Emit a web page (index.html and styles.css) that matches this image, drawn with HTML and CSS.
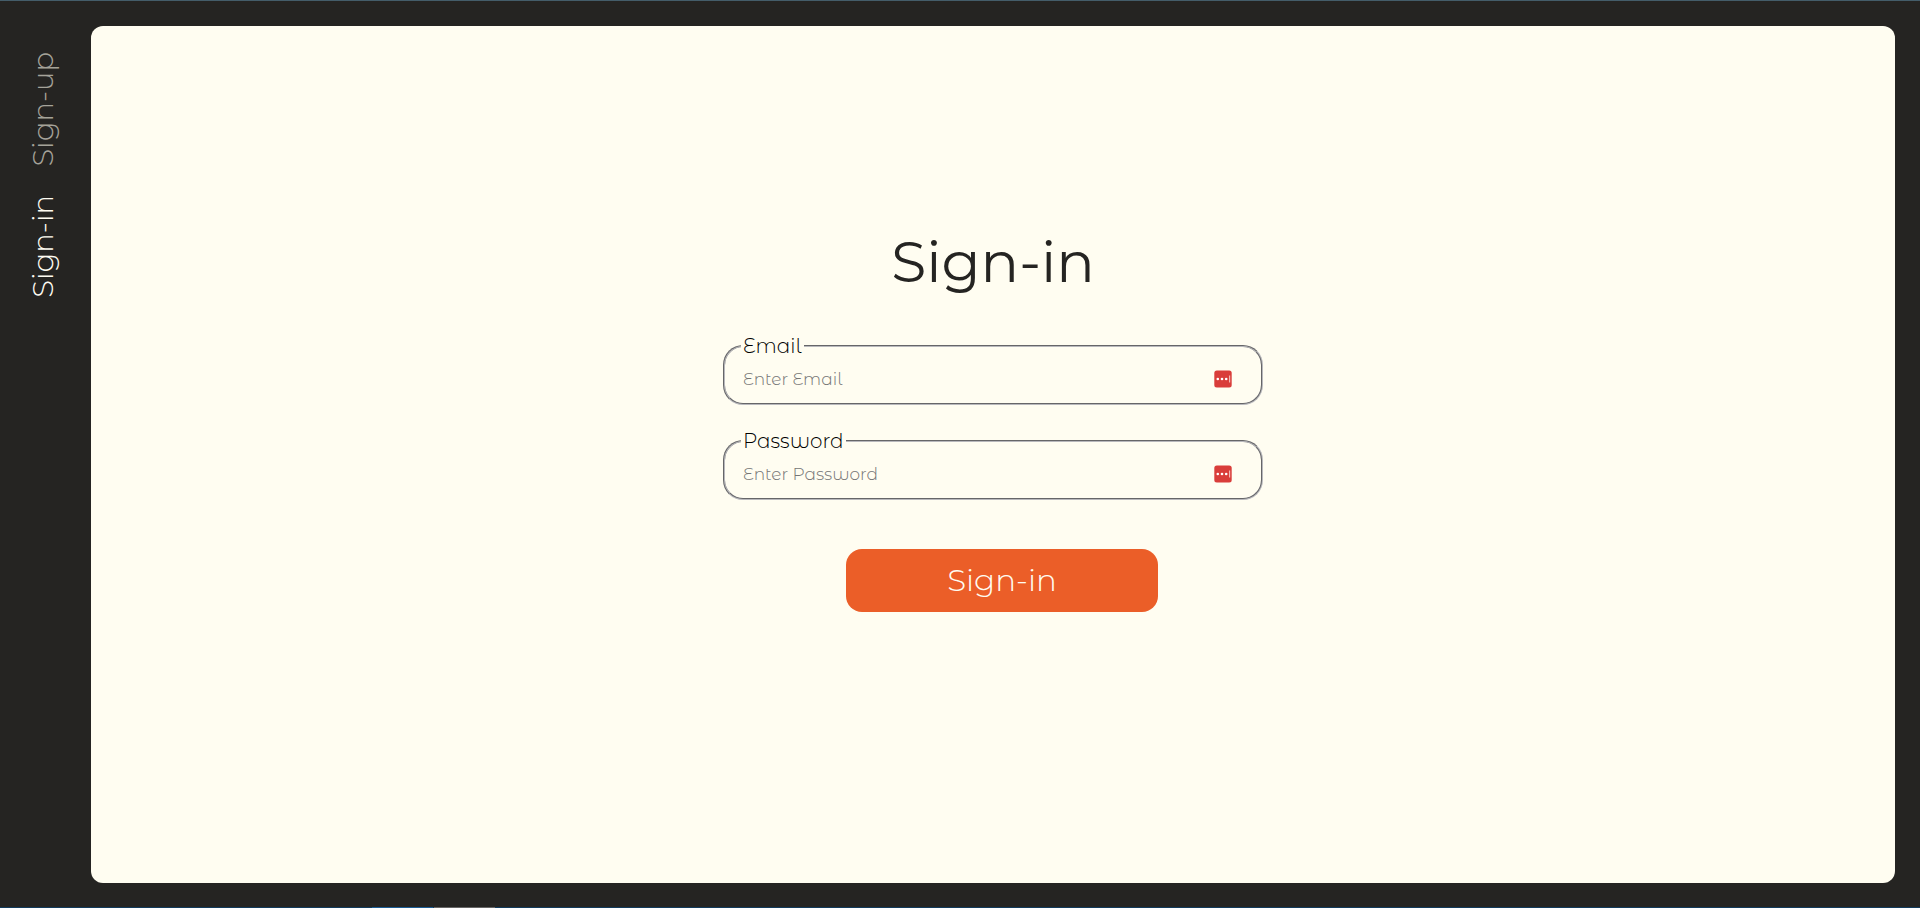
FILE: index.html
```html
<!DOCTYPE html>
<html lang="en">
<head>
<meta charset="utf-8">
<title>Sign-in</title>
<link rel="stylesheet" href="styles.css">
</head>
<body>
<div class="app">
  <nav class="sidebar">
    <a class="tab" href="#signup">Sign-up</a>
    <a class="tab active" href="#signin">Sign-in</a>
  </nav>
  <main class="panel">
    <form class="form">
      <h1 class="title">Sign-in</h1>
      <fieldset class="field">
        <legend><label for="email">Email</label></legend>
        <div class="row">
          <input id="email" type="email" placeholder="Enter Email">
          <svg class="key" viewBox="0 0 18 18" aria-hidden="true"><rect x="0.3" y="0.5" width="17.4" height="17" rx="2.5" fill="#d93d3a"/><circle cx="3.8" cy="9" r="1.3" fill="#fff"/><circle cx="8" cy="9" r="1.3" fill="#fff"/><circle cx="12.2" cy="9" r="1.3" fill="#fff"/><rect x="15" y="5.5" width="1.2" height="7" fill="#f3b5b0"/></svg>
        </div>
      </fieldset>
      <fieldset class="field">
        <legend><label for="password">Password</label></legend>
        <div class="row">
          <input id="password" type="password" placeholder="Enter Password">
          <svg class="key" viewBox="0 0 18 18" aria-hidden="true"><rect x="0.3" y="0.5" width="17.4" height="17" rx="2.5" fill="#d93d3a"/><circle cx="3.8" cy="9" r="1.3" fill="#fff"/><circle cx="8" cy="9" r="1.3" fill="#fff"/><circle cx="12.2" cy="9" r="1.3" fill="#fff"/><rect x="15" y="5.5" width="1.2" height="7" fill="#f3b5b0"/></svg>
        </div>
      </fieldset>
      <button class="submit" type="submit">Sign-in</button>
    </form>
  </main>
</div>
</body>
</html>
```
FILE: styles.css
```css
* { box-sizing: border-box; }

body {
  margin: 0;
  background: #252422;
  font-family: Montserrat, Inter, sans-serif;
  font-weight: 300;
}

.app {
  display: flex;
  min-height: 100vh;
  padding: 25px 25px 25px 0;
  border-top: 1px solid #445d6a;
  background: linear-gradient(90deg, #123b5c 372px, #1a5c94 372px 433px, #123b5c 433px 434px, #666666 434px 495px, #123b5c 495px) left bottom / 100% 1px no-repeat;
}

.sidebar {
  display: flex;
  flex-direction: column;
  align-items: center;
  gap: 28px;
  width: 91px;
  padding: 26px 6px 0 0;
}

.tab {
  writing-mode: vertical-rl;
  transform: rotate(180deg);
  font-size: 29px;
  line-height: 36px;
  color: #a5a39a;
  text-decoration: none;
}

.tab.active { color: #fffcf2; }

.panel {
  flex: 1;
  display: flex;
  justify-content: center;
  align-items: center;
  border-radius: 12px;
  background: #fffdf1;
}

.form {
  display: flex;
  flex-direction: column;
  align-items: center;
  width: 540px;
  padding-bottom: 71px;
}

.title {
  margin: 0 0 36px;
  font-size: 57px;
  font-weight: 400;
  line-height: 72px;
  color: #252422;
}

.field {
  width: 100%;
  margin: 0 0 24px;
  padding: 0 29px 3px 16px;
  border: 2px groove #b8b8bc;
  border-radius: 20px;
  font-family: "Montserrat Alternates", Montserrat, Inter, sans-serif;
}

.field legend {
  padding: 0 2px;
  font-size: 20px;
  line-height: 24px;
  color: #000;
}

.row {
  display: flex;
  align-items: center;
  height: 42px;
}

.row input {
  flex: 1;
  min-width: 0;
  padding: 0 2px;
  border: 0;
  outline: 0;
  background: transparent;
  font: inherit;
  font-size: 17px;
}

.row input::placeholder { color: #757575; }

.key {
  width: 18px;
  height: 18px;
}

.submit {
  width: 312px;
  height: 63px;
  margin: 25px 0 0 18px;
  padding: 0 0 2px;
  border: 0;
  border-radius: 16px;
  background: #eb5e28;
  color: #fffcf2;
  font: inherit;
  font-size: 31px;
}
```
